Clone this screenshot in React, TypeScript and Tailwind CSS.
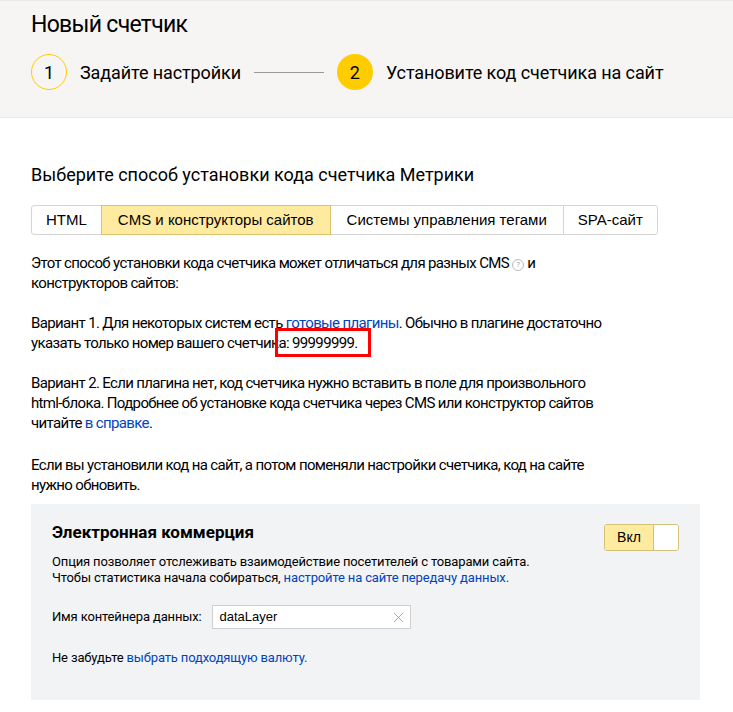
import React from 'react';

const tabs = ['HTML', 'CMS и конструкторы сайтов', 'Системы управления тегами', 'SPA-сайт'];

const Step: React.FC<{ num: number; label: string; active?: boolean }> = ({ num, label, active }) => (
  <div className="flex items-center">
    <div
      className={
        active
          ? 'flex h-[36px] w-[36px] items-center justify-center rounded-full bg-[#ffcc00] text-[18px] text-black'
          : 'flex h-[36px] w-[36px] items-center justify-center rounded-full border border-[#ffcc00] text-[18px] text-black'
      }
    >
      {num}
    </div>
    <span className="ml-[13px] text-[18px] tracking-[-0.1px] text-black">{label}</span>
  </div>
);

const Link: React.FC<{ children: React.ReactNode }> = ({ children }) => (
  <a className="text-[#0044bb]">{children}</a>
);

export default function App() {
  return (
    <div className="h-[712px] w-[733px] overflow-hidden bg-white font-['Roboto','Liberation_Sans',sans-serif] text-black">
      {/* header */}
      <div className="h-[118px] border-t border-b border-[#e9e9e9] bg-[#f6f5f3] px-[31px] pt-[9px]">
        <h1 className="text-[23px] leading-[30px] font-normal tracking-[-0.7px]">Новый счетчик</h1>
        <div className="mt-[14px] flex items-center">
          <Step num={1} label="Задайте настройки" />
          <div className="mx-[13px] h-px w-[70px] bg-[#999]" />
          <Step num={2} label="Установите код счетчика на сайт" active />
        </div>
      </div>

      <div className="px-[31px]">
        <h2 className="mt-[45px] text-[18px] leading-[24px] font-normal">
          Выберите способ установки кода счетчика Метрики
        </h2>

        <div className="mt-[18px] flex font-['Liberation_Sans',Arial,sans-serif] text-[15px]">
          {tabs.map((t, i) => (
            <div
              key={t}
              className={
                i === 1
                  ? 'relative z-10 -ml-px flex h-[30px] items-center border border-[#d9c170] bg-[#ffeba0] px-[16px]'
                  : i === 0
                    ? 'flex h-[30px] items-center rounded-l-[3px] border border-[#d5d5d5] bg-white px-[14px]'
                    : i === tabs.length - 1
                      ? '-ml-px flex h-[30px] items-center rounded-r-[3px] border border-[#d5d5d5] bg-white px-[14px]'
                      : '-ml-px flex h-[30px] items-center border border-[#d5d5d5] bg-white px-[16px]'
              }
            >
              {t}
            </div>
          ))}
        </div>

        <div className="mt-[18px] w-[640px] text-[15px] leading-[20px] tracking-[-0.65px]">
          <p className="mb-[20px]">
            Этот способ установки кода счетчика может отличаться для разных CMS{' '}
            <span className="inline-flex h-[12px] w-[12px] translate-y-[1px] items-center justify-center rounded-full border border-[#bbb] align-middle text-[8px] leading-none tracking-normal text-[#aaa]">
              ?
            </span>{' '}
            и<br />
            конструкторов сайтов:
          </p>
          <p className="mb-[20px]">
            Вариант 1. Для некоторых систем есть <Link>готовые плагины</Link>. Обычно в плагине достаточно
            <br />
            указать только номер вашего счетчика:{' '}
            <span className="relative">
              99999999.
              <span className="absolute -top-[6px] -right-[13px] -bottom-[5px] -left-[17px] border-[3px] border-[#f00]" />
            </span>
          </p>
          <p className="mb-[22px]">
            Вариант 2. Если плагина нет, код счетчика нужно вставить в поле для произвольного
            <br />
            html-блока. Подробнее об установке кода счетчика через CMS или конструктор сайтов
            <br />
            читайте <Link>в справке</Link>.
          </p>
          <p>
            Если вы установили код на сайт, а потом поменяли настройки счетчика, код на сайте
            <br />
            нужно обновить.
          </p>
        </div>

        {/* e-commerce panel */}
        <div className="mt-[9px] h-[196px] w-[669px] bg-[#f2f3f5] px-[21px] pt-[17px]">
          <div className="flex items-start justify-between">
            <div className="text-[17px] leading-[22px] font-bold">Электронная коммерция</div>
            <div className="mt-[3px] flex h-[27px] w-[75px] overflow-hidden rounded-[3px] border border-[#d3c07a] text-[14px]">
              <div className="flex w-[49px] items-center justify-center border-r border-[#d3c07a] bg-[#ffeba0] font-['Liberation_Sans',Arial,sans-serif]">
                Вкл
              </div>
              <div className="flex-1 bg-white" />
            </div>
          </div>
          <div className="mt-[3px] text-[13px] leading-[16px] tracking-[-0.15px]">
            Опция позволяет отслеживать взаимодействие посетителей с товарами сайта.
            <br />
            Чтобы статистика начала собираться, <Link>настройте на сайте передачу данных.</Link>
          </div>
          <div className="mt-[19px] flex items-center">
            <span className="text-[13px] tracking-[-0.15px]">Имя контейнера данных:</span>
            <div className="ml-[10px] flex h-[24px] w-[199px] items-center justify-between border border-[#cfcfcf] bg-white pr-[6px] pl-[7px] font-['Liberation_Sans',Arial,sans-serif] text-[13px]">
              <span>dataLayer</span>
              <svg width="11" height="11" viewBox="0 0 11 11" className="text-[#aaa]">
                <path d="M1 1L10 10M10 1L1 10" stroke="currentColor" strokeWidth="1" fill="none" />
              </svg>
            </div>
          </div>
          <div className="mt-[21px] text-[13px] leading-[16px] tracking-[-0.15px]">
            Не забудьте <Link>выбрать подходящую валюту.</Link>
          </div>
        </div>
      </div>
    </div>
  );
}
